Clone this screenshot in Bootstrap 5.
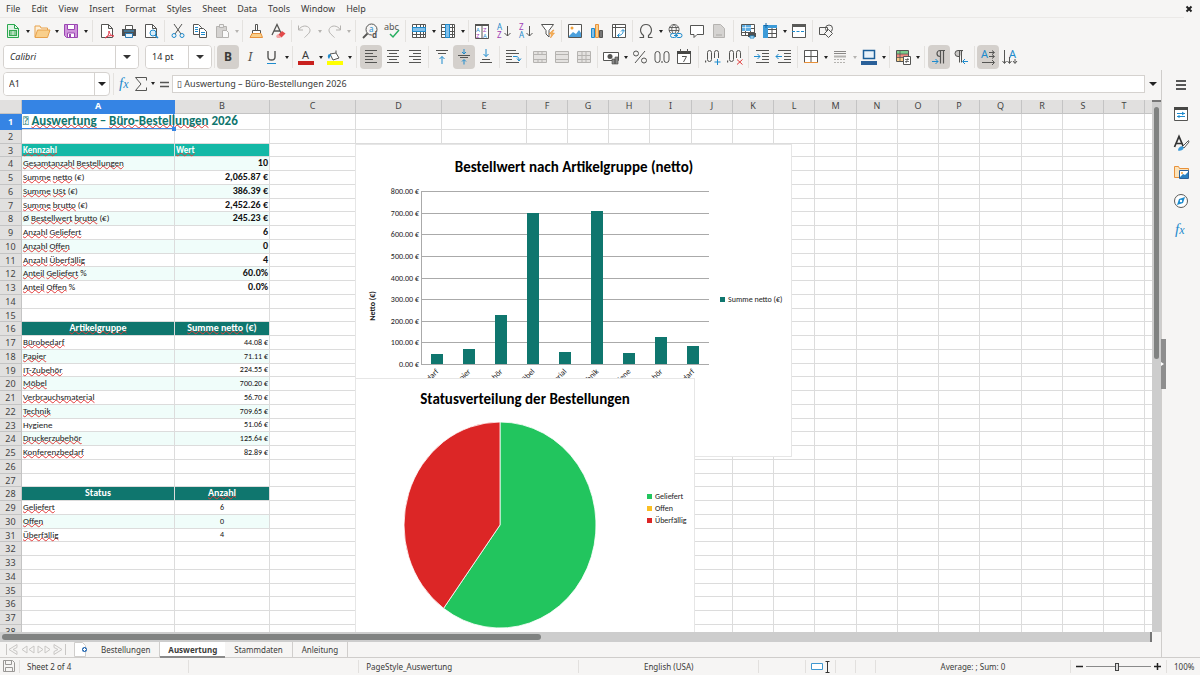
<!DOCTYPE html>
<html lang="en">
<head>
<meta charset="utf-8">
<meta name="viewport" content="width=device-width, initial-scale=1">
<title>Auswertung – Büro-Bestellungen 2026</title>
<link href="https://cdn.jsdelivr.net/npm/bootstrap@5.3.0/dist/css/bootstrap.min.css" rel="stylesheet">
<style>
:root { --ui: #f6f5f4; --line: #d9d7d5; --ink: #3b3b39; --sel: #3584e4; --teal: #0f766e; --calc: Carlito, Lato, sans-serif; }
body { font: 9px/12px "Noto Sans", sans-serif; color: var(--ink); background: var(--ui); }
button { font: inherit; color: inherit; background: none; border: 0; padding: 0; }
input, select { font: inherit; color: inherit; }
svg { display: block; }
.menubar { height: 17px; padding: 0 5px 0 0; }
.menubar a { color: var(--ink); text-decoration: none; padding: 0 5px 0 6px; }
.rule { height: 1px; background: #ebe9e7; margin-right: 16px; }
.toolrow { height: 26px; padding-left: 2px; }
.tool { width: 22px; height: 24px; border-radius: 4px; display: flex; align-items: center; justify-content: center; flex: none; }
.tool svg { overflow: visible; }
.tool.slim { width: 16px; }
.tool.pressed { background: #d4d0cc; }
.drop { width: 7px; height: 24px; flex: none; display: flex; align-items: center; justify-content: center; }
.drop::before, .combo button::before { content: ""; border: 2px solid transparent; border-top: 3px solid #222; border-bottom: 0; }
.drop.wide::before { border-width: 4px 4px 0; }
.drop:disabled::before { border-top-color: #b5b3b0; }
.divide { width: 1px; height: 22px; background: #e4e2df; margin: 0 2px; flex: none; }
.divide.wide { margin: 0 3px; }
.combo { height: 24px; border: 1px solid #d5d2cf; border-radius: 4px; background: #fff; color: #2e2e2e; overflow: hidden; flex: none; }
.combo select { width: 100%; height: 100%; border: 0; padding: 0 0 0 6px; appearance: none; outline: 0;
  background: linear-gradient(#d5d2cf, #d5d2cf) right 22px top / 1px 100% no-repeat,
  url("data:image/svg+xml,%3Csvg xmlns='http://www.w3.org/2000/svg' width='8' height='4'%3E%3Cpath d='M0 0h8l-4 4z' fill='%23333'/%3E%3C/svg%3E") right 7px center no-repeat, #fff; }
.combo input { border: 0; padding: 0 0 0 5px; outline: 0; min-width: 0; }
.combo button { width: 22px; border-left: 1px solid #d5d2cf; display: flex; align-items: center; justify-content: center; }
.combo button::before { border-width: 4px 4px 0; }
.font-name { width: 136px; font-style: italic; margin: 0 6px 0 1px; }
.font-size { width: 67px; }
.name-box { width: 107px; }
.formula-row { height: 30px; padding: 0 5px 3px 3px; flex: none; }
.formula-input { height: 18px; border: 1px solid #d5d2cf; background: #fff; padding: 0 4px; outline: 0; min-width: 0; }
.sheet-view { overflow: hidden; position: relative; background: #fff; min-width: 0; }
.sheet { table-layout: fixed; border-collapse: separate; border-spacing: 0; width: 100%; min-width: 1600px; background: #fff; }
.sheet th, .sheet td { padding: 0 1px; border: solid #dcdcdc; border-width: 0 1px 1px 0; height: 14px; line-height: 12px; white-space: nowrap; vertical-align: top; }
.sheet tr.short > * { height: 13px; line-height: 11px; }
.sheet tr.tall > * { height: 16px; line-height: 14px; }
.sheet th { font-weight: 400; background: #e1e0df; border-color: #c4c4c4; text-align: center; color: #444; overflow: hidden; }
.sheet th.current { background: var(--sel); color: #fff; font-weight: 700; border-color: var(--sel); }
.sheet tbody th { padding-top: 1px; }
.sheet td { font-family: var(--calc); font-size: 9px; color: #222; }
.sheet td.amount { font-size: 8px; color: #111; }
.sheet td.tint { background: #f0fdfa; }
.sheet td.heading { background: var(--teal); color: #fff; font-weight: 700; text-align: center; font-size: 10px; }
.sheet td.heading.bright { background: #14b8a6; text-align: left; font-size: 9px; }
.sheet td.big { font-size: 10px; font-weight: 700; color: #111; }
.sheet td.title { font-size: 13px; font-weight: 700; color: var(--teal); position: relative; box-shadow: inset 0 -1px var(--sel), inset -1px 0 var(--sel); }
.sheet td.title::after { content: ""; position: absolute; right: -2px; bottom: -2px; width: 4px; height: 4px; background: var(--sel); }
.tofu { font-family: "DejaVu Sans Mono", monospace; font-weight: 400; font-size: 9px; line-height: 9px; vertical-align: 1px; }
.wrong { text-decoration: underline wavy #e23b3b 1px; text-underline-offset: -1px; text-decoration-skip-ink: none; }
.chart-box { position: absolute; background: #fff; border: 1px solid #e6e6e6; font-family: var(--calc); font-size: 8px; }
.chart-box svg text { fill: #222; }
.chart-box svg .chart-title { font-size: 15px; font-weight: 700; fill: #000; }
.bar-chart { left: 355px; top: 44px; }
.pie-chart { left: 355px; top: 278px; }
.v-scroll { width: 9px; background: #cdcdcd; padding: 5px 2px 0; flex: none; border-top: 2px solid #777; }
.v-scroll div { height: 48%; background: #808281; border-radius: 3px; }
.h-scroll { height: 10px; background: #cdcdcd; padding: 2px; margin-right: 9px; border-right: 2px solid #777; flex: none; }
.h-scroll div { height: 6px; width: 47%; background: #808281; border-radius: 3px; }
.tabs-row { height: 16px; border-bottom: 1px solid #cfcdcb; flex: none; font-size: 8px; }
.tabs-row a { color: var(--ink); text-decoration: none; padding: 0 9px; height: 16px; line-height: 15px; border-right: 1px solid #d0cecc; }
.tabs-row a.current { background: #fff; font-weight: 700; border: 0; border-bottom: 2px solid #8a8a8a; padding: 0 8px; }
.side { width: 39px; border-left: 1px solid #cfcdcb; position: relative; padding-top: 3px; border-bottom: 1px solid #cfcdcb; flex: none; }
.side .tool { height: 24px; margin-bottom: 5px; }
.grip { position: absolute; left: -1px; top: 269px; width: 5px; height: 50px; background: #8e8e8e; display: flex; align-items: center; }
.grip::before { content: ""; border: 2px solid transparent; border-left: 3px solid #fff; border-right: 0; }
.status { height: 17px; flex: none; font-size: 8px; }
.status > * { height: 13px; line-height: 13px; border-right: 1px solid #e2e0de; white-space: nowrap; flex: 1 1 0; }
.status .indented { padding-left: 7px; }
.status .g-162 { flex-grow: 162; } .status .g-170 { flex-grow: 170; } .status .g-213 { flex-grow: 213; } .status .g-180 { flex-grow: 180; }
.status .g-46 { flex-grow: 46; } .status .g-195 { flex-grow: 195; }
.status .w-20px { flex: none; width: 20px; } .status .w-30px { flex: none; width: 30px; }
.status .zoomer { flex: none; width: 96px; } .status .percent { flex: none; width: 33px; border: 0; }
.zoom-range { appearance: none; background: linear-gradient(#8a8a8a, #8a8a8a) center / 100% 1px no-repeat; width: 65px; height: 9px; margin: 0 3px; }
.zoom-range::-webkit-slider-thumb { appearance: none; width: 4px; height: 8px; background: #ddd; border: 1px solid #444; }
</style>
</head>
<body class="vh-100 d-flex flex-column overflow-hidden">
<header class="flex-shrink-0">
  <nav class="menubar d-flex align-items-center" aria-label="Main menu">
    <a href="#">File</a><a href="#">Edit</a><a href="#">View</a><a href="#">Insert</a><a href="#">Format</a><a href="#">Styles</a><a href="#">Sheet</a><a href="#">Data</a><a href="#">Tools</a><a href="#">Window</a><a href="#">Help</a>
    <button class="ms-auto" aria-label="Close"><svg width="12" height="12" viewBox="0 0 12 12"><path d="M3.5 3.5l5 5m0-5l-5 5" stroke="#222" stroke-width="2"/></svg></button>
  </nav>
  <div class="rule"></div>
  <div class="toolrow d-flex align-items-center" id="standard"></div>
  <div class="toolrow d-flex align-items-center" id="formatting">
    <div class="combo font-name"><select aria-label="Font name"><option>Calibri</option></select></div>
    <div class="combo font-size"><select aria-label="Font size"><option>14 pt</option></select></div>
  </div>
</header>

<div class="d-flex flex-grow-1 overflow-hidden">
  <main class="d-flex flex-column flex-grow-1 overflow-hidden">
    <div class="formula-row d-flex align-items-center">
      <div class="combo name-box d-flex"><input class="flex-grow-1" aria-label="Name box" value="A1"><button aria-label="Name box list"></button></div>
      <span class="divide wide"></span>
      <div class="d-flex align-items-center" id="formulaTools"></div>
      <input class="formula-input flex-grow-1" aria-label="Formula" value="▯ Auswertung – Büro-Bestellungen 2026">
      <button class="drop wide ms-1" aria-label="Expand formula bar"></button>
    </div>
    <div class="d-flex flex-grow-1 overflow-hidden">
      <div class="sheet-view flex-grow-1">
        <table class="sheet" id="sheet"></table>
        <div class="chart-box bar-chart" id="barChart"></div>
        <div class="chart-box pie-chart" id="pieChart"></div>
      </div>
      <div class="v-scroll"><div></div></div>
    </div>
    <div class="h-scroll"><div></div></div>
    <nav class="tabs-row d-flex" aria-label="Sheets">
      <svg class="ms-1 flex-shrink-0" width="64" height="15" viewBox="0 0 64 15" fill="none" stroke="#c9c7c5"><path d="M2.5 2v11M13 2.500l-8 5 8 5v-3l-4-2 4-2zM23 4l-5 3.500 5 3.500zM30 4l-5 3.500 5 3.500zM34 4l5 3.500-5 3.500zM41 4l5 3.500-5 3.500zM50 2.500l8 5-8 5v-3l4-2-4-2zM61.500 2v11"/></svg>
      <button aria-label="Add sheet"><svg width="24" height="15" viewBox="0 0 24 15"><path d="M6.500.5h8l3 3v11h-11z" fill="#fff" stroke="#d0cecc"/><circle cx="16.500" cy="7.500" r="2.500" fill="#2f6fb5"/><path d="M15 7.500h3M16.500 6v3" stroke="#fff"/></svg></button>
      <a href="#">Bestellungen</a><a href="#" class="current">Auswertung</a><a href="#">Stammdaten</a><a href="#">Anleitung</a>
    </nav>
  </main>
  <aside class="side d-flex flex-column align-items-center" id="side"><div class="grip"></div></aside>
</div>

<footer class="status d-flex align-items-center">
  <span class="w-20px d-flex justify-content-end"><svg class="me-1" width="12" height="12" viewBox="0 0 12 12" fill="none" stroke="#9a9896"><path d="M.5.5h9l2 2v9h-11zM2.500.5v4h6v-4M2.500 11.500v-4h7v4"/></svg></span>
  <span class="g-162 indented">Sheet 2 of 4</span>
  <span class="g-170"></span>
  <span class="g-213 indented">PageStyle_Auswertung</span>
  <span class="g-180 text-center">English (USA)</span>
  <span class="g-46"></span>
  <span class="w-30px d-flex align-items-center justify-content-center"><svg width="20" height="12" viewBox="0 0 20 12" fill="none"><path d="M.5 2.500h11v6H.5z" stroke="#3e97d0" fill="#fff"/><path d="M14.500.5h4M14.500 11.500h4M16.500.5v11" stroke="#333"/></svg></span>
  <span class="w-20px"></span><span class="w-20px"></span>
  <span class="g-195 text-center">Average: ; Sum: 0</span>
  <span class="zoomer d-flex align-items-center justify-content-center">
    <button aria-label="Zoom out"><svg width="7" height="7"><path d="M0 3.500h7" stroke="#222" stroke-width="1.500"/></svg></button>
    <input class="zoom-range" type="range" aria-label="Zoom" min="0" max="100" value="48">
    <button aria-label="Zoom in"><svg width="7" height="7"><path d="M0 3.500h7M3.500 0v7" stroke="#222" stroke-width="1.500"/></svg></button>
  </span>
  <span class="percent indented">100%</span>
</footer>

<script>
/* ---------- icons, drawn on a 16 × 16 grid ---------- */
const D = '#555553', B = '#1e8bcd', G = '#b5b3b0', P = '#a040b5';
const s = (d, c = D, more = '') => `<path d="${d}" stroke="${c}" ${more}/>`;
const t = (x, y, txt, c, size, more = '') => `<text x="${x}" y="${y}" fill="${c}" font-size="${size}" ${more}>${txt}</text>`;
const page = (c = D) => s('M2.500 1.500h7l4 4v9h-11zM9.500 1.500v4h4', c, 'fill="#fff"');
const grid = 'M1.500 1.500h13v13h-13zM1.500 4.500h13M1.500 8.500h13M1.500 11.500h13M5.500 1.500v13M9.500 1.500v13M12.500 1.500v13';
const lines = (w) => w.map(([x, l, y]) => `M${x} ${y}.5h${l}`).join('');
const decimals = '<g stroke="#555553"><rect x="2.500" y="1.500" width="4" height="11" rx="2"/><rect x="9.500" y="1.500" width="4" height="11" rx="2"/></g><path d="M0 11.500h1.200v2H0z" fill="#555553"/><path d="M9 9h7v7H9z" fill="#f6f5f4"/>';
const icons = {
  new: s('M2.500 1.500h7l4 4v9h-11zM9.500 1.500v4h4', '#2aa84f', 'fill="#dff3e4"') + '<path d="M4 7h8v6H4z" fill="#37a852"/>' + s('M5 9h6M5 11h6M8 8v4', '#fff', 'stroke-width=".8"'),
  open: s('M1 14V3h5l1 2h6.500v2', '#e8a14a', 'fill="#fdf0da"') + s('M1 14.500L3.500 7H16l-2.500 7.500z', '#e8a14a', 'fill="#f9cf8b"'),
  save: s('M1.500 1.500h13v13h-11l-2-2z', '#9b46b3', 'fill="#cf94db"') + s('M4.500 1.500h7v5h-7z', '#9b46b3', 'fill="#fff"') + s('M4.500 14v-4h7v4', '#9b46b3', 'fill="#fff"') + s('M7 11v3', '#9b46b3', 'stroke-width="2"'),
  pdf: page() + s('M6 15c3-1 4-4 4-7 1 4 3 5 5 5-4-1-7 0-9 2z', '#e0394a'),
  print: '<path d="M1 6h14v7H1z" fill="#4d5052"/>' + s('M4.500 6V2.500h7V6', D, 'fill="#fff"') + s('M4.500 10.500h7v4h-7z', '#2c7bb5', 'fill="#e9f4fb"') + '<path d="M3 8h10" stroke="#3d9bd8"/>',
  preview: page() + '<circle cx="10" cy="10" r="3" fill="#d8ecf8" stroke="#1e8bcd"/>' + s('M12 12l3 3', B, 'stroke-width="1.500"'),
  cut: s('M4 1l7 10M12 1L5 11') + '<g stroke="#1e8bcd"><circle cx="4" cy="12.500" r="2"/><circle cx="12" cy="12.500" r="2"/></g>',
  copy: s('M1.500 1.500h5l3 3v7h-8z', D, 'fill="#fff"') + s('M7.500 5.500h4l3 3v6h-7z', D, 'fill="#fff"') + s('M3 4.500h3M3 6.500h3M3 8.500h3M9 9.500h4M9 11.500h4', B),
  paste: s('M2.500 3.500h10v11h-10z', G, 'fill="#d5d3d1"') + s('M5.500 1.500h4v3h-4z', G, 'fill="#eee"') + s('M8.500 7.500h4l2 2v5h-6z', G, 'fill="#fafafa"'),
  clone: s('M7.500 1.500h2v6h-2zM4.500 7.500h8v3h-8z', D, 'fill="#fff"') + s('M4 10.500h9l1.500 4H2z', '#e8913a', 'fill="#f9cf8b"'),
  clear: s('M2 12L7 1.500 11 10M4 8h6', D, 'stroke-width="1.300"') + '<path d="M8 12l4-4 3.500 2.500-4 4z" fill="#e24a4a"/><path d="M6 13l2-2 3 3-1 1H7z" fill="#f5a6a6"/>',
  undo: s('M1.500 2.500v4.500H6M1.500 7c3-5 9-5 11-1.500 2 3.500-2 6-5 9', G),
  redo: s('M14.500 2.500v4.500H10M14.500 7c-3-5-9-5-11-1.500-2 3.500 2 6 5 9', G),
  find: '<circle cx="9.500" cy="6.500" r="5.500" stroke="#555553"/>' + s('M5.500 10.500L1 15', D, 'stroke-width="1.800"') + t(7, 9, 'a', B, 8) + '<path d="M10 9h6v7h-6z" fill="#f6f5f4"/>' + t(10, 15, 'd', D, 8, 'font-weight="700"'),
  spell: t(0, 7, 'abc', D, 9) + s('M6 11l3 3 6-7', '#27ae60', 'stroke-width="1.500"'),
  rowIcon: s(grid, D, 'fill="#fff"') + s('M1.500 4.500h13v4h-13z', B, 'fill="#83c0ea"'),
  colIcon: s(grid, D, 'fill="#fff"') + s('M5.500 1.500v13h4v-13z', B, 'fill="#83c0ea"'),
  sort: s('M1.500 1.500h13v14h-13zM8 1.500v14', D, 'fill="#fff"') + '<path d="M1 1h14v2H1z" fill="#555553"/>' + t(2, 9, 'A', B, 6) + t(2, 15, 'Z', P, 6) + t(9, 9, 'Z', P, 6) + t(9, 15, 'A', B, 6),
  asc: t(1, 7, 'A', B, 8) + t(1, 15, 'Z', P, 8) + s('M11.500 3v10M8.500 10l3 3 3-3'),
  desc: t(1, 7, 'Z', P, 8) + t(1, 15, 'A', B, 8) + s('M11.500 3v10M8.500 10l3 3 3-3'),
  filter: s('M1.500 1.500h12L9 7.500V14l-3-3V7.500z', D, 'fill="#fff"') + '<path d="M13 7l-4 4h2.500l-1 4 4-5H12l2-3z" fill="#f5b45c" stroke="#e88b2a" stroke-width=".5"/>',
  image: s('M1.500 1.500h13v13h-13z', D, 'fill="#fff"') + '<path d="M2 13l4-4 3 2 3-4 2 3v4H2z" fill="#4ba0dc"/><circle cx="5" cy="5" r="1.500" fill="#f0a13c"/>',
  chart: s('M2.500 5.500h3v9h-3z', B, 'fill="#83c0ea"') + s('M6.500 1.500h3v13h-3z', '#e8913a', 'fill="#f9cf8b"') + s('M10.500 7.500h3v7h-3z', D, 'fill="#777"'),
  pivot: s('M1.500 1.500h13v13h-13zM1.500 4.500h13M4.500 1.500v13', D, 'fill="#fff"') + s('M6.500 12.500c5 0 6-3 5.500-5.500M10 8.500L12 6.500l2 2M8.500 10.500l-2 2 2 2', B),
  omega: s('M1.500 14.500h4v-2C0 8 3 1.500 8 1.500S16 8 10.500 12.500v2h4', D, 'stroke-width="1.200"'),
  link: s('M7 1.500a5 5 0 1 0 .1 0M2.500 4.500h9M2 7.500h10M7 1.500c-3 2-3 7 0 10M7 1.500c3 2 3 7 0 10', D, 'stroke-width=".9"') + '<g fill="#f6f5f4" stroke="#1e8bcd"><rect x="3.500" y="10.500" width="6" height="4" rx="2"/><rect x="9" y="10.500" width="6" height="4" rx="2"/></g>' + s('M7 12.500h4', B),
  comment: s('M1.500 2.500h13v9H8l-3 3v-3H1.500z', D, 'fill="#fff"'),
  headfoot: s('M2.500 1.500h7l4 4v9h-11z', G, 'fill="#d5d3d1"') + '<path d="M5 11h6v2H5z" fill="#c0bebb"/>',
  printarea: s('M1.500 1.500h13v11h-13zM1.500 5.500h13M1.500 9.500h13M5.500 1.500v11M10.500 1.500v11', D, 'fill="#fff"') + '<path d="M2 2h9v6H2z" fill="#5eade2"/>' + s('M2 4.500h9M5.500 2v6', '#fff', 'stroke-width=".6"') + '<path d="M8 10h8v4H8z" fill="#4d5052"/>' + s('M10 13h4v2h-4z', B, 'fill="#fff"'),
  freeze: s('M1.500 2.500h13v12h-13zM1.500 6.500h13M1.500 10.500h13M10 2.500v12', D, 'fill="#fff"') + '<path d="M1 2h14v3H6v10H1z" fill="#3d9bd8"/>' + s('M4 0v5M2 2.500h4', '#1668a8'),
  split: s('M1.500 1.500h13v13h-13z', D, 'fill="#fff"') + '<path d="M1 1h14v3H1z" fill="#5a5a58"/>' + s('M1 8.500h14', B, 'stroke-dasharray="3 1.500"'),
  draw: s('M1.500 4.500h8v7h-8z') + '<circle cx="11" cy="5.500" r="3.500" stroke="#555553"/>' + s('M10.500 6.500l4 4-4 4-4-4z', D, 'fill="#f6f5f4"'),
  bold: t(4, 12, 'B', '#3b3b39', 12, 'font-weight="700"'),
  italic: t(6, 12, 'I', D, 12, 'font-style="italic" font-family="Noto Serif, Liberation Serif"'),
  underline: s('M4 2v6c0 4 7 4 7 0V2', D, 'stroke-width="1.400"') + s('M3 14.500h9', B),
  fontcolor: t(4, 10, 'A', '#3b3b39', 11) + '<path d="M0 12h16v4H0z" fill="#c9211e"/>',
  highlight: s('M3 5l6-1 3 5-6 2zM9 4V1.500', D, 'fill="#fff"') + '<path d="M2 5c-2 2-1 4 0 5l2-4z" fill="#1e8bcd"/><path d="M0 12h16v4H0z" fill="#ff0"/>',
  left: s(lines([[2, 12, 1], [2, 8, 4], [2, 12, 7], [2, 8, 10], [2, 12, 13]])),
  center: s(lines([[2, 12, 1], [4, 8, 4], [2, 12, 7], [4, 8, 10], [2, 12, 13]])),
  right: s(lines([[2, 12, 1], [6, 8, 4], [2, 12, 7], [6, 8, 10], [2, 12, 13]])),
  top: s(lines([[2, 12, 1], [4, 8, 4]])) + s('M8 15V7.500M5.500 10L8 7.500l2.500 2.500', B),
  middle: s(lines([[2, 12, 6], [4, 8, 8]])) + s('M8 0v4.500M6 3l2 2 2-2M8 15.500V11M6 12.500l2-2 2 2', B),
  bottom: s(lines([[4, 8, 10], [2, 12, 13]])) + s('M8 0v7.500M5.500 5L8 7.500 10.500 5', B),
  wrap: s(lines([[1, 10, 1], [1, 13, 4], [1, 6, 7], [1, 6, 10], [1, 13, 13]])) + s('M8 7.500h3c2 0 3 1 3 4M12 9.500l2 2.500 2-2.500', B),
  merge: s('M1.500 2.500h13v11h-13zM1.500 5.500h13M1.500 10.500h13M6 2.500v3M10 2.500v3M6 10.500v3M10 10.500v3', G, 'fill="#e4e2e0"'),
  merge2: s('M1.500 2.500h13v11h-13zM1.500 5.500h13M1.500 10.500h13', G, 'fill="#e4e2e0"'),
  merge3: s('M1.500 2.500h13v11h-13zM1.500 6.500h13M1.500 10.500h13M6 2.500v11M10 2.500v11', G, 'fill="#e4e2e0"'),
  currency: s('M.5 3.500h15v8H.5z', D, 'fill="#fff"') + '<circle cx="7" cy="7.500" r="2.500" fill="#555553"/><path d="M9 10h3v5H9zM12 8h3v7h-3z" fill="#888" stroke="#474745" stroke-width=".6"/>',
  percent: s('M3 14L13 2') + '<g stroke="#555553"><circle cx="4" cy="4.500" r="2.500"/><circle cx="12" cy="11.500" r="2.500"/></g>',
  number: '<g stroke="#555553"><rect x="1" y="2.500" width="5" height="11" rx="2.500"/><rect x="10" y="2.500" width="5" height="11" rx="2.500"/></g><path d="M7.500 12h1v2h-1z" fill="#474745"/>',
  date: s('M1.500 2.500h13v12h-13z', D, 'fill="#fff"') + '<path d="M1 2h14v3H1z" fill="#474745"/>' + s('M4.500 0v3M11.500 0v3M6 7.500h4.500L7.500 13'),
  addDec: decimals + s('M9.500 13h6M12.500 10v6', B),
  delDec: decimals + s('M10 10.500l5.500 5M15.500 10.500l-5.500 5', '#e23b3b'),
  indent: s(lines([[2, 13, 1], [8, 7, 4], [8, 7, 7], [8, 7, 10], [2, 13, 13]])) + s('M0 7.500h6M3.500 5L6 7.500 3.500 10', B),
  outdent: s(lines([[2, 13, 1], [8, 7, 4], [8, 7, 7], [8, 7, 10], [2, 13, 13]])) + s('M0 7.500h6M2.500 5L0 7.500 2.500 10', B),
  borders: s('M1.500 1.500h13v12h-13zM8 1.500v12M1.500 7.500h13', D, 'fill="#fff"') + s('M1 13.500h14', '#e8913a'),
  style: s('M2 2.500h12M2 4.500h12', '#8a8886') + s('M2 7.500h12', G, 'stroke-width="2"') + s('M2 10.500h12M2 13.500h12', G, 'stroke-dasharray="2 1"'),
  bordercolor: s('M2.500 1.500h11v8h-11z', '#1c5f99', 'fill="#e8f2fa" stroke-width="1.500"') + '<path d="M0 12h16v4H0z" fill="#2a6099"/>',
  cond: s('M1.500 1.500h12v11h-12z', D, 'fill="#fff"') + '<path d="M2 2h11v3H2z" fill="#7ccf8e"/><path d="M2 5h11v3H2z" fill="#f08a80"/><path d="M2 8h6v4H2z" fill="#f9cf8b"/>' + s('M1.500 5h12M1.500 8.500h12M5 2v10', D, 'stroke-width=".8"') + s('M8.500 7.500h7v8h-7z', D, 'fill="#fff"') + s('M10 10.500h4M10 12.500h4M13 9l-2 5', D, 'stroke-width=".8"'),
  ltr: s('M14 1.500H9a3 3 0 0 0 0 6h.5M9.500 1.500v13M12.500 1.500v13', D, 'stroke-width="1.200"') + s('M1 12.500h6M4.500 10L7 12.500 4.500 15', B),
  rtl: s('M10 1.500H5a3 3 0 0 0 0 6h2', D, 'fill="#c9c7c5"') + s('M6.500 1.500v12M8.500 1.500v12') + s('M15 12.500H10M12 10L9.500 12.500l2.500 2.500', B),
  horiz: t(1, 9, 'A', B, 11) + s('M9 3.500h5M9 7.500h5M2 13.500h12M12 1.500l2.500 2L12 5.500M12 5.500l2.500 2L12 9.500M12 11l2.500 2.500L12 16'),
  vert: t(7, 9, 'A', B, 11) + s('M2.500 1v13M.5 12l2 2.500 2-2.500M7.500 8v6M5.500 12l2 2.500 2-2.500M13 10v4M11 12l2 2.500 2-2.500'),
  fx: t(2, 12, '<tspan font-size="15">f</tspan>x', B, 12, 'font-family="Liberation Serif" font-style="italic"'),
  sigma: s('M13.500 4.500v-3h-11L8 8l-5.500 6.500h11v-3'),
  equal: s('M4 6.500h9M4 10.500h9', D, 'stroke-width="1.500"'),
  menu: s('M3 4h10M3 8h10M3 12h10', '#222', 'stroke-width="1.500"'),
  props: s('M1.500 2.500h13v12h-13z', D, 'fill="#fff"') + '<path d="M1 1h14v3H1z" fill="#474745"/>' + s('M4 7.500h8M4 10.500h8M9 6l2 1.500L9 9M6.500 9L5 10.500 6.500 12', B),
  styles: s('M1.500 12L6 1.500 10.500 12M3 8.500h6', '#333', 'stroke-width="1.700"') + s('M15.500 5.500l-6 6 1.500 1.500 5-6z', D, 'fill="#fff"') + '<path d="M5 15.500c0-3 3-5 5-4 2 2-1 5-5 4z" fill="#3d9bd8"/>',
  gallery: s('M1.500 13.500v-11h4l1 2h9v9z', '#e8913a', 'fill="#fbe3bb"') + s('M6.500 6.500h9v8h-9z', '#2a6099', 'fill="#fff"') + '<path d="M7 13l3-3 2 1 3-3v6H7z" fill="#2a7fc0"/><circle cx="9" cy="9" r="1" fill="#f0a13c"/>',
  compass: '<circle cx="8" cy="8" r="6.500" fill="#fff" stroke="#5a5a58"/><path d="M12 4l-2 6-6 2 2-6z" fill="#1e8bcd"/><circle cx="8" cy="8" r="1.200" fill="#fff"/>'
};
const svg = (name) => `<svg width="16" height="16" viewBox="0 0 16 16" fill="none" aria-hidden="true">${icons[name]}</svg>`;

/* a bar is a string: "|" thin divider, "‖" wide divider, "name" button,
   "+" drop-down arrow, "-" disabled arrow, "*" pressed state */
const bar = (spec) => spec.split(' ').map((w) => {
  if (w === '|') return '<span class="divide"></span>';
  if (w === '‖') return '<span class="divide wide"></span>';
  const name = w.replace(/[+*-]/g, '');
  let out = `<button class="tool${w.includes('*') ? ' pressed' : ''}" aria-label="${name}">${svg(name)}</button>`;
  if (w.includes('+')) out += `<button class="drop" aria-label="${name} options"></button>`;
  if (w.includes('-')) out += `<button class="drop" aria-label="${name} options" disabled></button>`;
  return out;
}).join('');
const add = (id, html) => document.getElementById(id).insertAdjacentHTML('beforeend', html);
add('standard', bar('new+ open+ save+ ‖ pdf print preview | cut copy paste- | clone clear | undo- redo- ‖ find spell | rowIcon+ colIcon+ | sort asc desc filter | image chart pivot | omega+ link comment headfoot ‖ printarea freeze+ split | draw'));
add('formatting', bar('| bold* italic underline+ | fontcolor+ highlight+ ‖ left* center right | top middle* bottom | wrap | merge merge2 merge3 | currency+ percent number date ‖ addDec delDec | indent outdent | borders+ style- bordercolor+ | cond+ ‖ ltr* rtl | horiz* vert'));
add('formulaTools', bar('fx sigma+ equal').replace(/class="tool"/g, 'class="tool slim"'));
add('side', bar('menu props styles gallery compass fx'));

/* ---------- sheet ---------- */
const widths = [22, 153, 95, 86, 86, 85, ...Array.from({ length: 22 }, (_, i) => i % 4 === 3 ? 42 : 41)];
const kpi = [['Gesamtanzahl Bestellungen', '10'], ['Summe netto (€)', '2,065.87 €'], ['Summe USt (€)', '386.39 €'], ['Summe brutto (€)', '2,452.26 €'], ['Ø Bestellwert brutto (€)', '245.23 €'], ['Anzahl Geliefert', '6'], ['Anzahl Offen', '0'], ['Anzahl Überfällig', '4'], ['Anteil Geliefert %', '60.0%'], ['Anteil Offen %', '0.0%']];
const groups = [['Bürobedarf', 44.08], ['Papier', 71.11], ['IT-Zubehör', 224.55], ['Möbel', 700.20], ['Verbrauchsmaterial', 56.70], ['Technik', 709.65], ['Hygiene', 51.06], ['Druckerzubehör', 125.64], ['Konferenzbedarf', 82.89]];
const states = [['Geliefert', 6, '#22c55e'], ['Offen', 0, '#fbbf24'], ['Überfällig', 4, '#dc2626']];
const spell = (x) => x.replace(/[A-Za-zÄÖÜäöüß-]{2,}/g, (w) => ['Hygiene', 'Status'].includes(w) ? w : `<span class="wrong">${w}</span>`);
const rows = {};
rows[1] = [['title', '<span class="tofu">⍰</span> ' + spell('Auswertung – Büro-Bestellungen 2026')]];
rows[3] = [['heading bright', spell('Kennzahl')], ['heading bright', spell('Wert')]];
kpi.forEach(([a, b], i) => rows[4 + i] = [[i % 2 ? '' : 'tint', spell(a)], [(i % 2 ? '' : 'tint ') + 'big text-end', b]]);
rows[16] = [['heading', spell('Artikelgruppe')], ['heading', spell('Summe netto (€)')]];
groups.forEach(([a, b], i) => rows[17 + i] = [[i % 2 ? 'tint' : '', spell(a)], [(i % 2 ? 'tint ' : '') + 'amount text-end', b.toFixed(2) + ' €']]);
rows[28] = [['heading', 'Status'], ['heading', spell('Anzahl')]];
states.forEach(([a, b], i) => rows[29 + i] = [[i % 2 ? 'tint' : '', spell(a)], [(i % 2 ? 'tint ' : '') + 'amount text-center', b]]);

let html = '<colgroup>' + widths.map((w) => `<col style="width:${w}px">`).join('') + '<col></colgroup><thead><tr><th></th>';
for (let c = 0; c < widths.length; c++) html += `<th scope="col"${c ? '' : ' class="current"'}>${c < 20 ? String.fromCharCode(65 + c) : ''}</th>`;
html += '</tr></thead><tbody>';
for (let r = 1; r <= 60; r++) {
  const kind = r === 1 ? 'tall' : r % 4 === 3 ? 'short' : '';
  html += `<tr class="${kind}"><th scope="row"${r === 1 ? ' class="current"' : ''}>${r}</th>`;
  for (let c = 0; c < widths.length; c++) { const cell = (rows[r] || [])[c]; html += cell ? `<td class="${cell[0]}">${cell[1]}</td>` : '<td></td>'; }
  html += '</tr>';
}
document.getElementById('sheet').innerHTML = html + '</tbody>';

/* ---------- column chart ---------- */
const X0 = 65, Y0 = 219, H = 173, STEP = 32;
let bars = '<text class="chart-title" x="218" y="27" text-anchor="middle">Bestellwert nach Artikelgruppe (netto)</text>';
for (let v = 0; v <= 800; v += 100) {
  const y = Math.round(Y0 - v / 800 * H) + .5;
  bars += `<path d="M${X0} ${y}h288" stroke="#aaa"/><text x="63" y="${y + 2}" text-anchor="end">${v.toFixed(2)} €</text>`;
}
bars += `<path d="M${X0 + .5} 46v173" stroke="#aaa"/>`;
groups.forEach(([name, v], i) => {
  const x = X0 + STEP * i + 16, h = Math.round(v / 800 * H);
  bars += `<rect x="${x - 6}" y="${Y0 - h}" width="12" height="${h}" fill="#0f766e"/><text transform="translate(${x + 2} 227) rotate(-45)" text-anchor="end">${name}</text>`;
});
bars += '<text transform="translate(19 161) rotate(-90)" text-anchor="middle" font-weight="700">Netto (€)</text><rect x="364" y="152" width="5" height="5" fill="#0f766e"/><text x="372" y="157">Summe netto (€)</text>';
add('barChart', `<svg width="435" height="311" role="img" aria-label="Bestellwert nach Artikelgruppe">${bars}</svg>`);

/* ---------- pie chart ---------- */
const cx = 144, cy = 146, rx = 96, ry = 103, total = states.reduce((n, x) => n + x[1], 0);
let pie = '<text class="chart-title" x="169" y="25" text-anchor="middle">Statusverteilung der Bestellungen</text>', at = 0;
states.forEach(([name, n, color], i) => {
  const a = at / total * 2 * Math.PI, b = (at + n) / total * 2 * Math.PI;
  if (n) pie += `<path d="M${cx} ${cy}L${cx + rx * Math.sin(a)} ${cy - ry * Math.cos(a)}A${rx} ${ry} 0 ${n / total > .5 ? 1 : 0} 1 ${cx + rx * Math.sin(b)} ${cy - ry * Math.cos(b)}z" fill="${color}" stroke="#fff" stroke-width=".8"/>`;
  at += n;
  pie += `<rect x="291" y="${115 + i * 12}" width="5" height="5" fill="${color}"/><text x="299" y="${120 + i * 12}">${name}</text>`;
});
add('pieChart', `<svg width="338" height="280" role="img" aria-label="Statusverteilung der Bestellungen">${pie}</svg>`);
</script>
<script src="https://cdn.jsdelivr.net/npm/bootstrap@5.3.0/dist/js/bootstrap.bundle.min.js"></script>
</body>
</html>
